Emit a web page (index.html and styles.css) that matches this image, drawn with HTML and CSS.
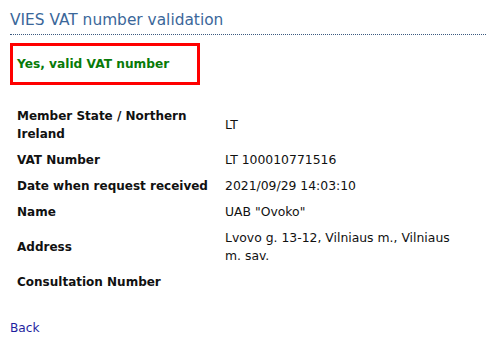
FILE: index.html
```html
<!DOCTYPE html>
<html>
<head>
<meta charset="utf-8">
<link rel="stylesheet" href="styles.css">
</head>
<body>
<div class="page">
  <h1 class="title">VIES VAT number validation</h1>
  <div class="result"><span class="valid">Yes, valid VAT number</span></div>
  <table class="details">
    <tr><th>Member State / Northern Ireland</th><td>LT</td></tr>
    <tr><th>VAT Number</th><td>LT 100010771516</td></tr>
    <tr><th>Date when request received</th><td>2021/09/29 14:03:10</td></tr>
    <tr><th>Name</th><td>UAB "Ovoko"</td></tr>
    <tr><th>Address</th><td>Lvovo g. 13-12, Vilniaus m., Vilniaus m. sav.</td></tr>
    <tr><th>Consultation Number</th><td></td></tr>
  </table>
  <a class="back" href="#">Back</a>
</div>
</body>
</html>
```

FILE: styles.css
```css
html, body {
  margin: 0;
  padding: 0;
  background: #fff;
}
.page {
  padding: 10px 1px 0 10px;
  font-family: "DejaVu Sans", Verdana, sans-serif;
  color: #111;
}
.title {
  margin: 0;
  padding: 0 0 4px 0;
  font-size: 15.4px;
  font-weight: normal;
  color: #3b679a;
  border-bottom: 1px dotted #3b5a80;
  line-height: 20px;
}
.result {
  margin-top: 8px;
  width: 180px;
  height: 36px;
  border: 3px solid #ff0000;
  display: flex;
  align-items: center;
  padding-left: 4px;
}
.valid {
  color: #087a08;
  font-weight: bold;
  font-size: 12.2px;
}
.details {
  margin-top: 18px;
  border-collapse: collapse;
  font-size: 12px;
}
.details th {
  text-align: left;
  font-weight: bold;
  width: 200px;
  padding: 4px 8px 4px 7px;
  line-height: 18px;
  vertical-align: middle;
}
.details td {
  padding: 4px 0;
  width: 232px;
  font-size: 12.4px;
  line-height: 18px;
  vertical-align: middle;
}
.back {
  display: inline-block;
  margin-top: 26px;
  font-size: 12.2px;
  color: #1f1fa0;
  text-decoration: none;
}
```
